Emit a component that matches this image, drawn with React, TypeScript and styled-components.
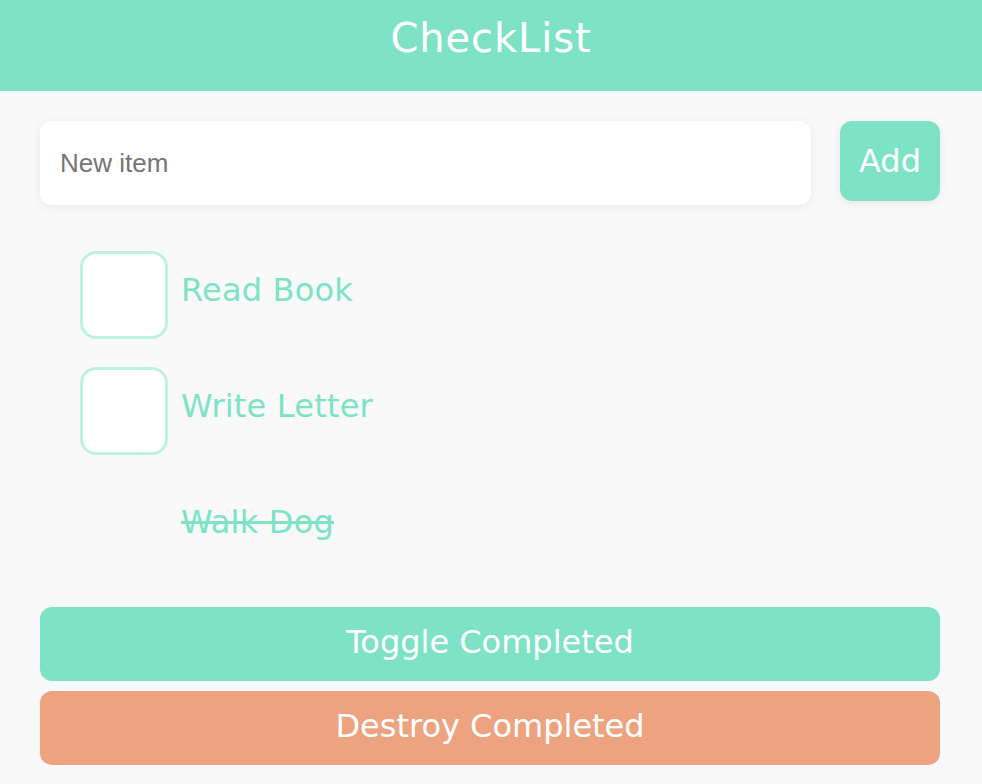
import React, { useState } from 'react';
import styled, { createGlobalStyle } from 'styled-components';

const GlobalStyle = createGlobalStyle`
  * {
    box-sizing: border-box;
  }
  body {
    margin: 0;
    background: #f9f9f9;
    font-family: "DejaVu Sans", sans-serif;
  }
`;

const green = '#7ee3c5';
const salmon = '#eda37f';

interface Item {
  id: number;
  text: string;
  completed: boolean;
}

const Header = styled.header`
  height: 91px;
  background: ${green};
  color: #fff;
  display: flex;
  justify-content: center;
  padding-top: 14px;
`;

const Title = styled.h1`
  margin: 0;
  font-size: 40px;
  font-weight: 400;
  line-height: 48px;
  letter-spacing: 0.9px;
`;

const Main = styled.main`
  padding: 30px 42px 0 40px;
`;

const Form = styled.form`
  display: flex;
  align-items: flex-start;
  gap: 29px;
`;

const Input = styled.input`
  flex: 1;
  height: 84px;
  border: none;
  border-radius: 12px;
  background: #fff;
  padding: 0 20px;
  font-family: "Liberation Sans", Arial, sans-serif;
  font-size: 26px;
  color: #333;
  box-shadow: 0 2px 10px rgba(0, 0, 0, 0.07);
  outline: none;

  &::placeholder {
    color: #757575;
  }
`;

const Button = styled.button<{ $color: string; $wide?: boolean }>`
  border: none;
  border-radius: 12px;
  background: ${({ $color }) => $color};
  color: #fff;
  font-family: "DejaVu Sans", sans-serif;
  font-size: 32px;
  cursor: pointer;
  width: ${({ $wide }) => ($wide ? '100%' : '100px')};
  height: ${({ $wide }) => ($wide ? '74px' : '80px')};
  padding: ${({ $wide }) => ($wide ? '0 0 4px' : '0')};
  box-shadow: ${({ $wide }) => ($wide ? 'none' : '0 2px 10px rgba(0, 0, 0, 0.07)')};
`;

const List = styled.ul`
  list-style: none;
  margin: 46px 0 0;
  padding: 0 0 0 40px;
  display: flex;
  flex-direction: column;
  gap: 28px;
`;

const Row = styled.li`
  display: flex;
  align-items: center;
  gap: 13px;
  height: 88px;
`;

const Box = styled.input<{ $hidden: boolean }>`
  appearance: none;
  margin: 0;
  width: 88px;
  height: 88px;
  border: 3.5px solid #bdf2e2;
  border-radius: 16px;
  background: #fff;
  cursor: pointer;
  visibility: ${({ $hidden }) => ($hidden ? 'hidden' : 'visible')};
`;

const Label = styled.span<{ $done: boolean }>`
  color: ${green};
  font-size: 32px;
  letter-spacing: 0.2px;
  padding-bottom: 10px;
  text-decoration: ${({ $done }) => ($done ? 'line-through' : 'none')};
`;

const Actions = styled.div`
  display: flex;
  flex-direction: column;
  gap: 10px;
  margin-top: 36px;
`;

export default function App() {
  const [items, setItems] = useState<Item[]>([
    { id: 1, text: 'Read Book', completed: false },
    { id: 2, text: 'Write Letter', completed: false },
    { id: 3, text: 'Walk Dog', completed: true },
  ]);
  const [draft, setDraft] = useState('');

  const add = (e: React.FormEvent) => {
    e.preventDefault();
    if (!draft.trim()) return;
    setItems([...items, { id: Date.now(), text: draft.trim(), completed: false }]);
    setDraft('');
  };

  const toggle = (id: number) =>
    setItems(items.map((i) => (i.id === id ? { ...i, completed: !i.completed } : i)));

  const allDone = items.every((i) => i.completed);

  return (
    <>
      <GlobalStyle />
      <Header>
        <Title>CheckList</Title>
      </Header>
      <Main>
        <Form onSubmit={add}>
          <Input placeholder="New item" value={draft} onChange={(e) => setDraft(e.target.value)} />
          <Button $color={green} type="submit">
            Add
          </Button>
        </Form>
        <List>
          {items.map((item) => (
            <Row key={item.id}>
              <Box
                type="checkbox"
                checked={item.completed}
                $hidden={item.completed}
                onChange={() => toggle(item.id)}
              />
              <Label $done={item.completed}>{item.text}</Label>
            </Row>
          ))}
        </List>
        <Actions>
          <Button
            $color={green}
            $wide
            type="button"
            onClick={() => setItems(items.map((i) => ({ ...i, completed: !allDone })))}
          >
            Toggle Completed
          </Button>
          <Button
            $color={salmon}
            $wide
            type="button"
            onClick={() => setItems(items.filter((i) => !i.completed))}
          >
            Destroy Completed
          </Button>
        </Actions>
      </Main>
    </>
  );
}
